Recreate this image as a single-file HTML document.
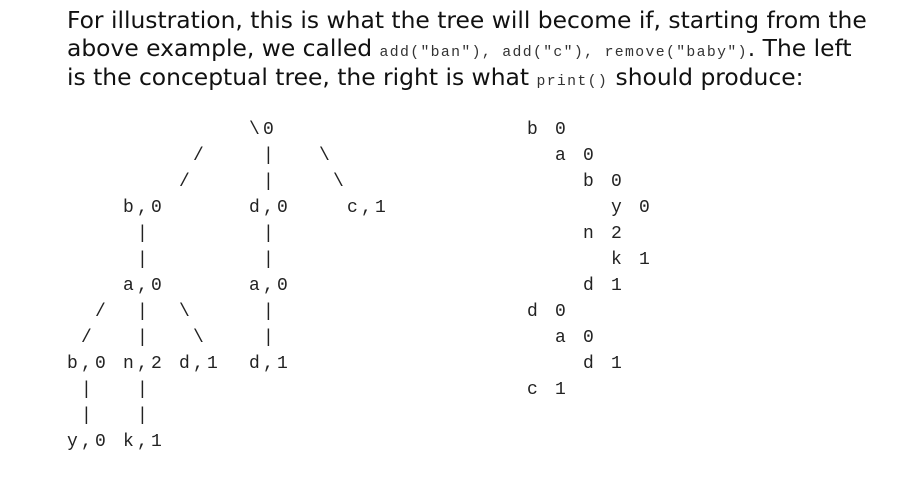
<!DOCTYPE html>
<html><head><meta charset="utf-8"><style>
body{margin:0;width:921px;height:483px;background:#fff;position:relative;overflow:hidden;color:#111}
.p{position:absolute;left:67px;font-family:"DejaVu Sans","Liberation Sans",sans-serif;font-size:23.4px;white-space:nowrap;line-height:28px}
.p code{font-family:"Liberation Mono",monospace;font-size:14.8px;color:#333;letter-spacing:1.35px}
pre{position:absolute;margin:0;font-family:"Liberation Mono",monospace;font-size:18px;letter-spacing:3.2px;line-height:26px;color:#222}
</style></head><body>
<div class="p" style="top:6px">For illustration, this is what the tree will become if, starting from the</div>
<div class="p" style="top:34px">above example, we called <code>add("ban"), add("c"), remove("baby")</code>. The left</div>
<div class="p" style="top:63px">is the conceptual tree, the right is what <code>print()</code> should produce:</div>
<pre style="left:67px;top:117px">             \0
         /    |   \
        /     |    \
    b,0      d,0    c,1
     |        |
     |        |
    a,0      a,0
  /  |  \     |
 /   |   \    |
b,0 n,2 d,1  d,1
 |   |
 |   |
y,0 k,1</pre>
<pre style="left:527px;top:117px">b 0
  a 0
    b 0
      y 0
    n 2
      k 1
    d 1
d 0
  a 0
    d 1
c 1</pre>
</body></html>
